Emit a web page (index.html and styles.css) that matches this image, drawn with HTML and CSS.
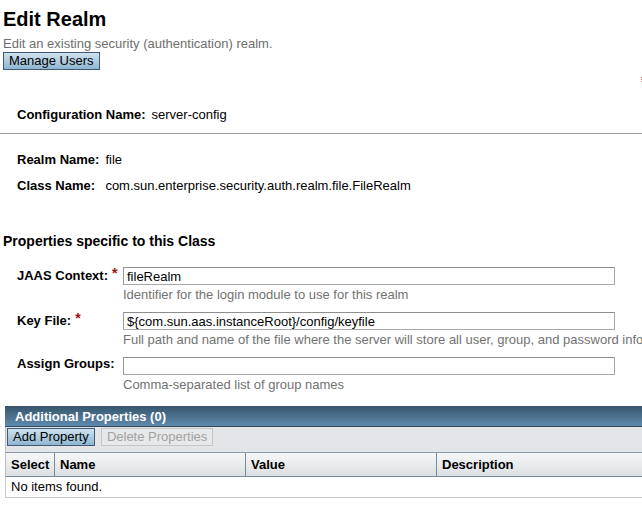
FILE: index.html
```html
<!DOCTYPE html>
<html lang="en">
<head>
<meta charset="utf-8">
<title>Edit Realm</title>
<link rel="stylesheet" href="styles.css">
</head>
<body>
<div class="page">
  <h1 class="page-title">Edit Realm</h1>
  <p class="subtitle">Edit an existing security (authentication) realm.</p>
  <div class="page-actions"><button class="btn btn-primary" type="button">Manage Users</button></div>
  <div class="legend"><span class="legend-mark"></span></div>

  <div class="config-row">
    <span class="label">Configuration Name:</span>
    <span class="value">server-config</span>
  </div>
  <div class="separator"></div>

  <div class="info-grid">
    <span class="label">Realm Name:</span><span class="value">file</span>
    <span class="label">Class Name:</span><span class="value">com.sun.enterprise.security.auth.realm.file.FileRealm</span>
  </div>

  <h2 class="section-heading">Properties specific to this Class</h2>

  <div class="form-grid">
    <div class="form-label">JAAS Context:<span class="req">*</span></div>
    <div class="form-field">
      <input class="text-input" type="text" value="fileRealm">
      <div class="help">Identifier for the login module to use for this realm</div>
    </div>

    <div class="form-label">Key File:<span class="req">*</span></div>
    <div class="form-field">
      <input class="text-input" type="text" value="${com.sun.aas.instanceRoot}/config/keyfile">
      <div class="help">Full path and name of the file where the server will store all user, group, and password information for this realm</div>
    </div>

    <div class="form-label form-label-high">Assign Groups:</div>
    <div class="form-field">
      <input class="text-input" type="text" value="">
      <div class="help">Comma-separated list of group names</div>
    </div>
  </div>

  <div class="table-wrap">
    <div class="table-title">Additional Properties (0)</div>
    <div class="table-actions">
      <button class="btn btn-primary" type="button">Add Property</button>
      <button class="btn btn-disabled" type="button" disabled>Delete Properties</button>
    </div>
    <div class="grid-head">
      <div class="head-cell">Select</div>
      <div class="head-cell sep">Name</div>
      <div class="head-cell sep">Value</div>
      <div class="head-cell sep">Description</div>
    </div>
    <div class="grid-empty">No items found.</div>
  </div>
</div>
</body>
</html>
```
FILE: styles.css
```css
html, body {
  margin: 0;
  padding: 0;
  overflow: hidden;
  background: #fff;
}

body {
  font-family: "Liberation Sans", Arial, sans-serif;
  font-size: 13px;
  color: #000;
}

.page {
  width: 642px;
}

.page-title {
  margin: 7px 0 0 3px;
  font-size: 20px;
  line-height: 24px;
  font-weight: bold;
}

.subtitle {
  margin: 5px 0 0 3px;
  font-size: 13px;
  line-height: 16px;
  color: #6e6e6e;
}

.page-actions {
  display: flex;
  padding-left: 3px;
}

.btn {
  font-family: "Liberation Sans", Arial, sans-serif;
  font-size: 13px;
  line-height: 16px;
  height: 18px;
  padding: 0 5px;
  margin: 0;
  box-sizing: border-box;
  border-radius: 0;
  cursor: default;
}

.btn-primary {
  color: #000;
  border: 1px solid #3e5a74;
  background: linear-gradient(#cfe2ef, #8fb5d1);
}

.btn-disabled {
  color: #a2a2a2;
  border: 1px solid #c3c5c7;
  background: #e7e8e9;
}

.legend {
  height: 14px;
  display: flex;
  justify-content: flex-end;
  align-items: flex-start;
}

.legend-mark {
  margin-top: 7px;
  width: 0;
  height: 5px;
  border-left: 1px dotted #c06a6a;
}

.label {
  font-weight: bold;
  font-size: 13px;
}

.config-row {
  margin: 23px 0 0 17px;
  display: flex;
  align-items: baseline;
  gap: 6px;
  line-height: 16px;
}

.separator {
  margin-top: 10px;
  height: 1px;
  background: #9aa1a7;
}

.info-grid {
  margin: 18px 0 0 17px;
  display: grid;
  grid-template-columns: max-content max-content;
  column-gap: 6px;
  row-gap: 10px;
  line-height: 16px;
  align-items: baseline;
}

.section-heading {
  margin: 38px 0 0 3px;
  font-size: 14px;
  line-height: 18px;
  font-weight: bold;
}

.form-grid {
  margin: 17px 0 0 17px;
  display: grid;
  grid-template-columns: 106px 492px;
  row-gap: 9px;
}

.form-label {
  font-weight: bold;
  font-size: 13px;
  line-height: 18px;
  white-space: nowrap;
}

.form-label-high {
  line-height: 14px;
}

.req {
  display: inline-block;
  vertical-align: top;
  margin-left: 4px;
  color: #a30d0d;
  font-size: 14px;
  line-height: 12px;
  font-weight: bold;
}

.form-field {
  display: flex;
  flex-direction: column;
  white-space: nowrap;
}

.text-input {
  width: 492px;
  height: 18px;
  box-sizing: border-box;
  margin: 0;
  padding: 0 3px;
  border: 1px solid #a9a9a9;
  border-top-color: #8e8e8e;
  border-left-color: #9a9a9a;
  font-family: "Liberation Sans", Arial, sans-serif;
  font-size: 13px;
  color: #000;
  background: #fff;
  outline: none;
}

.help {
  margin-top: 2px;
  font-size: 13px;
  line-height: 16px;
  color: #727272;
}

.table-wrap {
  margin: 13px 0 0 5px;
  width: 690px;
}

.table-title {
  height: 20px;
  border-bottom: 1px solid #2f4b62;
  background: linear-gradient(#37556c, #5f8aac);
  color: #fff;
  font-weight: bold;
  font-size: 13px;
  line-height: 21px;
  padding-left: 10px;
}

.table-actions {
  height: 25px;
  box-sizing: border-box;
  background: #e3e5e9;
  border-left: 1px solid #b9bfc5;
  padding: 1px 0 0 1px;
  display: flex;
  align-items: flex-start;
  gap: 6px;
}

.grid-head {
  display: grid;
  grid-template-columns: 48px 191px 191px 1fr;
  border-top: 1px solid #8a99a5;
  border-bottom: 1px solid #7a8b98;
  border-left: 1px solid #b9bfc5;
  background: linear-gradient(#f6f7f8, #dcdfe2);
}

.head-cell {
  height: 23px;
  line-height: 23px;
  padding-left: 5px;
  font-weight: bold;
  font-size: 13px;
}

.head-cell.sep {
  border-left: 1px solid #7a8b98;
}

.grid-empty {
  height: 20px;
  line-height: 20px;
  padding-left: 5px;
  border-left: 1px solid #c3c9ce;
  border-bottom: 1px solid #c3c9ce;
  font-size: 13px;
}
```
